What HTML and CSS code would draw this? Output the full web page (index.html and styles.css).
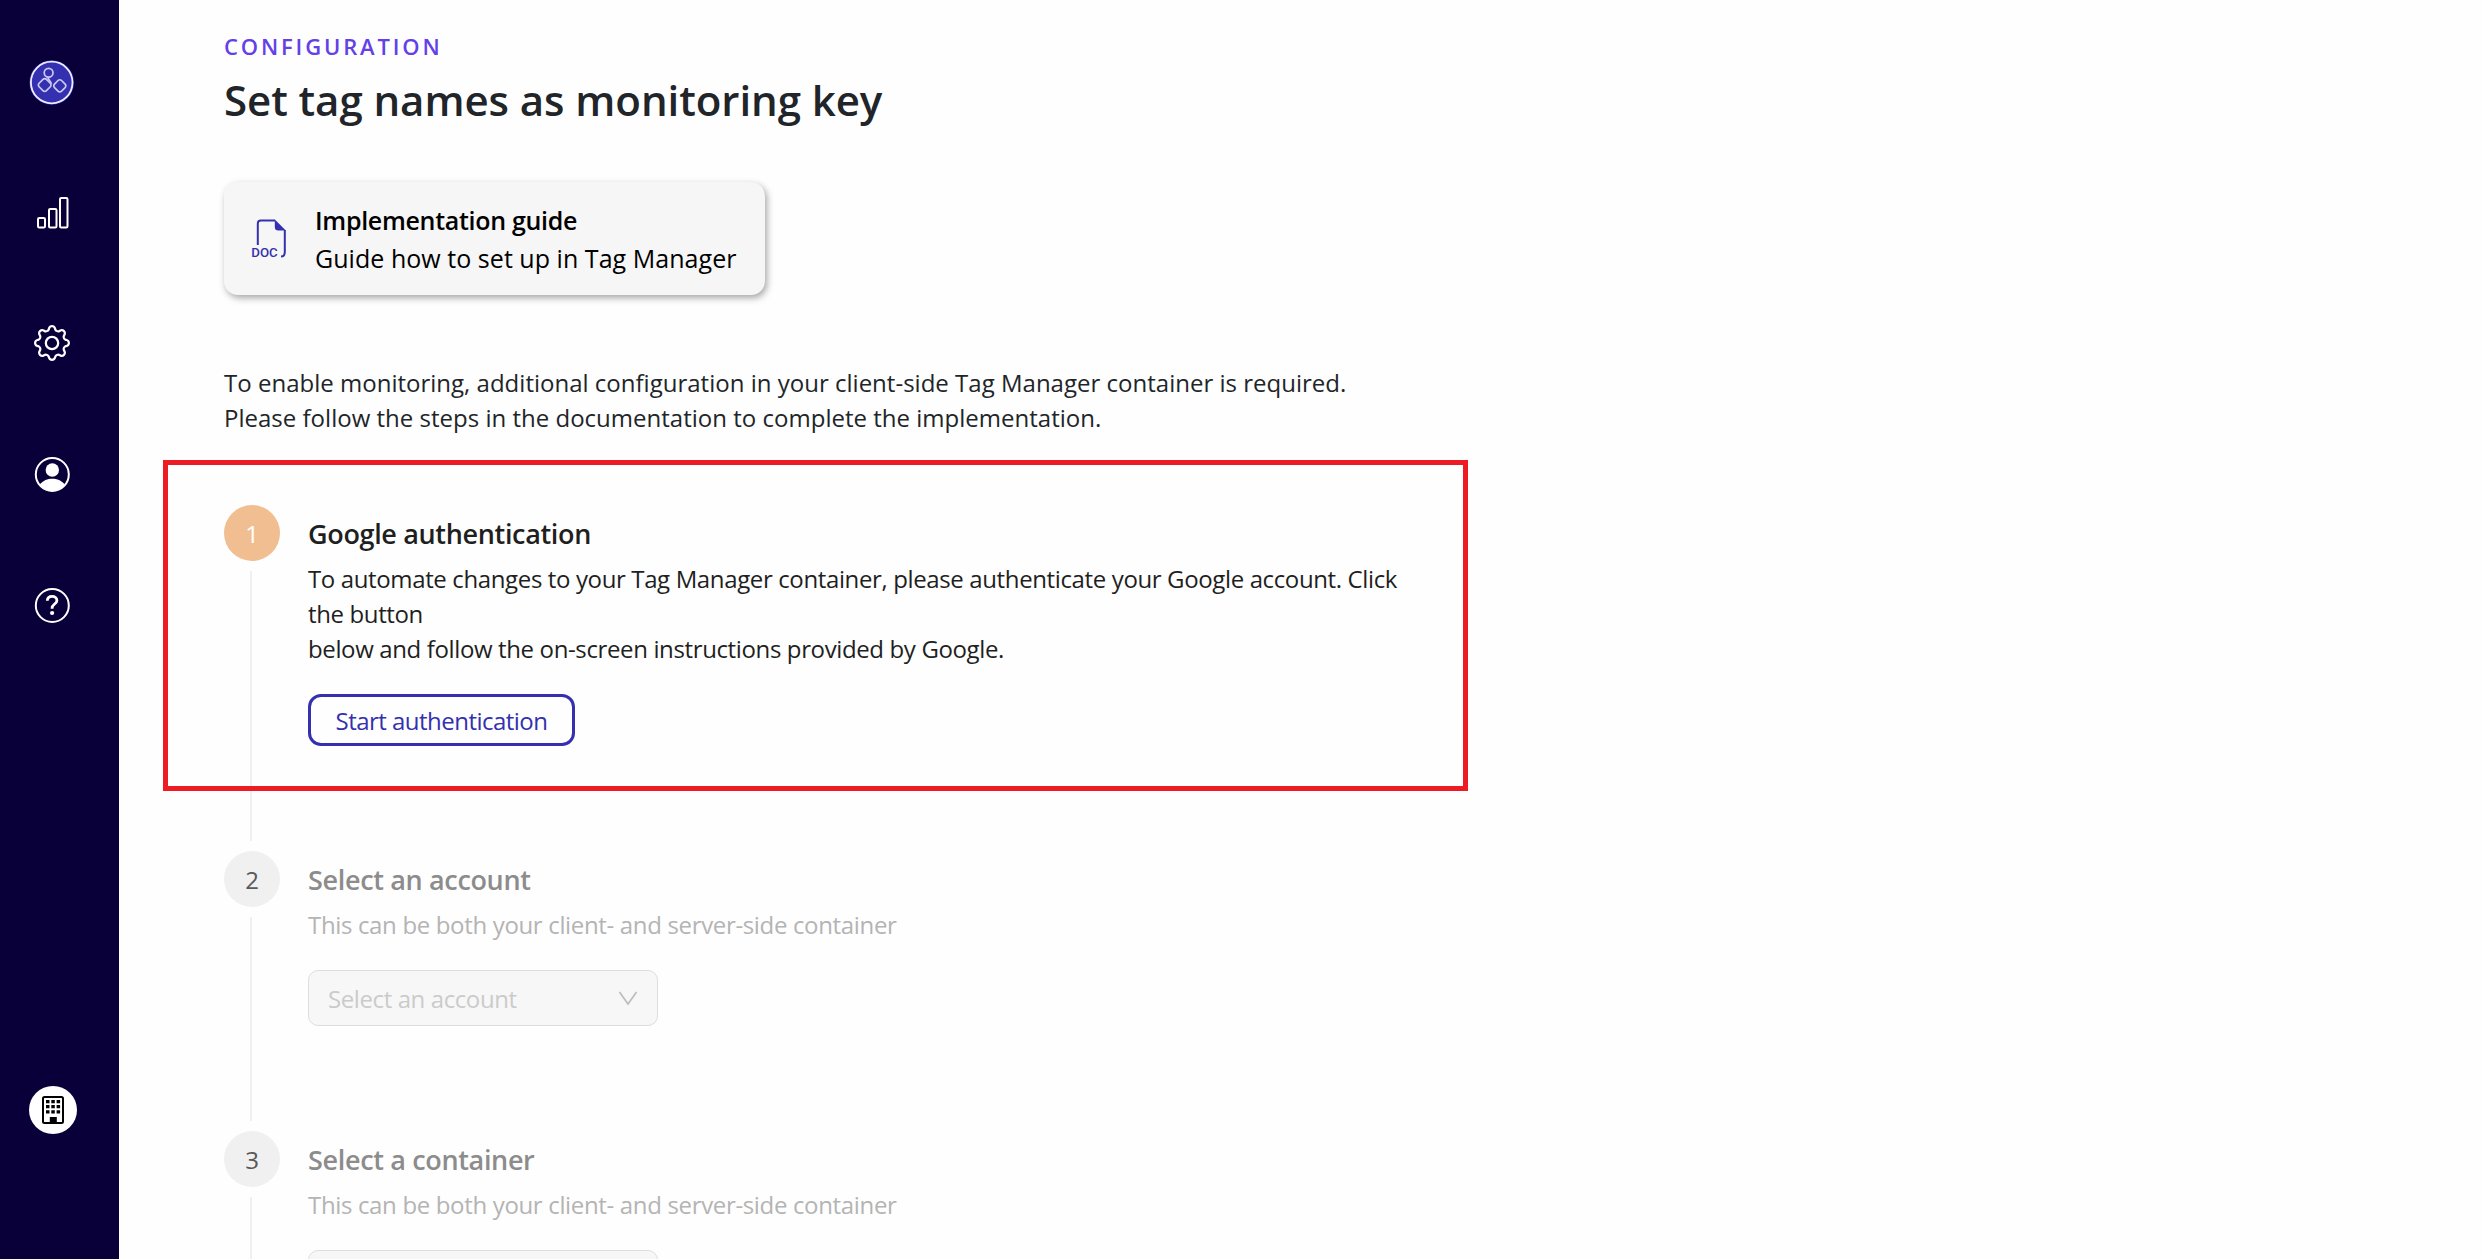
FILE: index.html
```html
<!DOCTYPE html>
<html lang="en">
<head>
<meta charset="utf-8">
<title>Set tag names as monitoring key</title>
<link rel="stylesheet" href="styles.css">
</head>
<body>
<nav class="sidebar">
  <svg class="logo" width="46" height="46" viewBox="0 0 46 46" fill="none">
    <circle cx="22.7" cy="22.5" r="22.3" fill="#3430b0"/>
    <circle cx="22.7" cy="22.5" r="20.8" stroke="#eeedfd" stroke-width="1.8"/>
    <g stroke="#c9c7f4" stroke-width="1.7">
      <circle cx="19.6" cy="12.8" r="4.4"/>
      <rect x="-5.2" y="-5.2" width="10.4" height="10.4" rx="2.5" transform="translate(15.7 25) rotate(45)"/>
      <rect x="-5" y="-5" width="10" height="10" rx="2.5" transform="translate(30.8 25.8) rotate(45)"/>
      <path d="M18.500 17.200l4 6.500"/>
    </g>
  </svg>
  <svg class="icon" width="36" height="36" viewBox="0 0 36 36" fill="none" stroke="#fff" stroke-width="2">
    <rect x="4" y="23" width="7" height="9.5" rx="1.2"/>
    <rect x="15" y="14" width="7.5" height="18.5" rx="1.2"/>
    <rect x="26" y="3" width="7.5" height="29.5" rx="1.2"/>
  </svg>
  <svg class="icon gear" width="36" height="36" viewBox="0 0 16 16" fill="#fff">
    <path d="M8 4.754a3.246 3.246 0 1 0 0 6.492 3.246 3.246 0 0 0 0-6.492zM5.754 8a2.246 2.246 0 1 1 4.492 0 2.246 2.246 0 0 1-4.492 0z"/>
    <path d="M9.796 1.343c-.527-1.79-3.065-1.79-3.592 0l-.094.319a.873.873 0 0 1-1.255.52l-.292-.16c-1.64-.892-3.433.902-2.54 2.541l.159.292a.873.873 0 0 1-.52 1.255l-.319.094c-1.79.527-1.79 3.065 0 3.592l.319.094a.873.873 0 0 1 .52 1.255l-.16.292c-.892 1.64.901 3.434 2.541 2.54l.292-.159a.873.873 0 0 1 1.255.52l.094.319c.527 1.79 3.065 1.79 3.592 0l.094-.319a.873.873 0 0 1 1.255-.52l.292.16c1.64.893 3.434-.902 2.54-2.541l-.159-.292a.873.873 0 0 1 .52-1.255l.319-.094c1.79-.527 1.79-3.065 0-3.592l-.319-.094a.873.873 0 0 1-.52-1.255l.16-.292c.893-1.64-.902-3.433-2.541-2.54l-.292.159a.873.873 0 0 1-1.255-.52l-.094-.319zm-2.633.283c.246-.835 1.428-.835 1.674 0l.094.319a1.873 1.873 0 0 0 2.693 1.115l.291-.16c.764-.415 1.6.42 1.184 1.185l-.159.292a1.873 1.873 0 0 0 1.116 2.692l.318.094c.835.246.835 1.428 0 1.674l-.319.094a1.873 1.873 0 0 0-1.115 2.693l.16.291c.415.764-.42 1.6-1.185 1.184l-.291-.159a1.873 1.873 0 0 0-2.693 1.116l-.094.318c-.246.835-1.428.835-1.674 0l-.094-.319a1.873 1.873 0 0 0-2.692-1.115l-.292.16c-.764.415-1.6-.42-1.184-1.185l.159-.291A1.873 1.873 0 0 0 1.945 8.93l-.319-.094c-.835-.246-.835-1.428 0-1.674l.319-.094A1.873 1.873 0 0 0 3.06 4.377l-.16-.292c-.415-.764.42-1.6 1.185-1.184l.292.159a1.873 1.873 0 0 0 2.692-1.115l.094-.319z"/>
  </svg>
  <svg class="icon" width="36" height="36" viewBox="0 0 36 36" fill="none">
    <circle cx="18.3" cy="18.5" r="16.5" stroke="#fff" stroke-width="2"/>
    <circle cx="18.3" cy="14" r="6.7" fill="#fff"/>
    <path d="M5.600 29c3.500-4.700 8-6.200 12.700-6.200s9.200 1.500 12.700 6.200A16.500 16.500 0 0 1 18.300 35 16.500 16.500 0 0 1 5.600 29z" fill="#fff"/>
  </svg>
  <svg class="icon" width="36" height="36" viewBox="0 0 36 36" fill="none">
    <circle cx="18.3" cy="18.5" r="16.5" stroke="#fff" stroke-width="2"/>
    <path d="M13.300 13.700c.1-2.800 2.100-4.300 4.900-4.300 2.700 0 4.700 1.600 4.700 4 0 3.600-4.800 3.700-4.800 7.700v.6" stroke="#fff" stroke-width="2.8"/>
    <circle cx="18.1" cy="26" r="2.1" fill="#fff"/>
  </svg>
  <svg class="org" width="48" height="48" viewBox="0 0 48 48">
    <circle cx="24" cy="24" r="24" fill="#fff"/>
    <rect x="14" y="11" width="20" height="26" rx="1.5" fill="none" stroke="#000" stroke-width="2"/>
    <path d="M17 14h3.500v3.200h-3.500zM22.300 14h3.500v3.200h-3.500zM27.600 14h3.500v3.200h-3.500zM17 19h3.500v3.200h-3.500zM22.300 19h3.500v3.200h-3.500zM27.600 19h3.500v3.200h-3.500zM17 24.200h3.500v3.200h-3.500zM22.300 24.200h3.500v3.200h-3.500zM27.600 24.200h3.500v3.200h-3.500zM20.800 31h7v6.500h-7z"/>
  </svg>
</nav>
<main class="main">
  <div class="eyebrow">CONFIGURATION</div>
  <h1 class="heading">Set tag names as monitoring key</h1>
  <a class="guide">
    <svg class="doc" width="36" height="42" viewBox="0 0 36 42" fill="none">
      <path d="M6.800 27V5.500c0-2 1-3 3-3H24M33.800 12V34c0 3-1 4.500-3.800 4.500" stroke="#3430b0" stroke-width="2"/>
      <path d="M23.800 1.500L34.800 12.500H27.300q-3.500 0-3.500-3.500z" fill="#3430b0"/>
      <text class="doc-label" x="0.3" y="38.8" textLength="26.5" lengthAdjust="spacingAndGlyphs">DOC</text>
    </svg>
    <span class="guide-text">
      <strong class="guide-title">Implementation guide</strong>
      <span class="guide-sub">Guide how to set up in Tag Manager</span>
    </span>
  </a>
  <p class="intro">To enable monitoring, additional configuration in your client-side Tag Manager container is required.<br>Please follow the steps in the documentation to complete the implementation.</p>
  <ol class="steps">
    <li class="step step-first active">
      <div class="rail"><span class="num">1</span></div>
      <div class="content">
        <h2 class="title">Google authentication</h2>
        <p class="desc">To automate changes to your Tag Manager container, please authenticate your Google account. Click<br>the button<br>below and follow the on-screen instructions provided by Google.</p>
        <button class="button">Start authentication</button>
      </div>
      <div class="highlight"></div>
    </li>
    <li class="step">
      <div class="rail"><span class="num">2</span></div>
      <div class="content">
        <h2 class="title">Select an account</h2>
        <p class="desc">This can be both your client- and server-side container</p>
        <div class="select"><span>Select an account</span>
          <svg width="20" height="16" viewBox="0 0 20 16" fill="none" stroke="#bfbfbf" stroke-width="1.8"><path d="M1.500 2L10 14 18.500 2"/></svg>
        </div>
      </div>
    </li>
    <li class="step step-last">
      <div class="rail"><span class="num">3</span></div>
      <div class="content">
        <h2 class="title">Select a container</h2>
        <p class="desc">This can be both your client- and server-side container</p>
        <div class="select"></div>
      </div>
    </li>
  </ol>
</main>
</body>
</html>
```
FILE: styles.css
```css
* { box-sizing: border-box; }
body {
  margin: 0;
  height: 1259px;
  overflow: hidden;
  display: flex;
  background: #fefefe;
  font-family: "Open Sans", sans-serif;
}
h1, h2, p, ol { margin: 0; padding: 0; font-weight: 400; }

.sidebar {
  width: 119px;
  height: 1259px;
  flex: none;
  background: #09003a;
  display: flex;
  flex-direction: column;
  padding: 60px 0 125px 29px;
}
.sidebar svg { flex: none; display: block; }
.icon { margin: 95px 0 0 5px; }
.logo + .icon { margin-top: 89px; }
.logo + .icon + .icon { margin-top: 94px; }
.org { margin-top: auto; }

.main { flex: 1; height: 1259px; overflow: hidden; padding: 31px 0 0 105px; }
.eyebrow {
  font-size: 22px;
  line-height: 30px;
  font-weight: 600;
  letter-spacing: 2.85px;
  color: #6340e8;
}
.heading {
  margin-top: 11px;
  font-size: 42px;
  line-height: 56px;
  font-weight: 600;
  letter-spacing: -0.06px;
  color: #212529;
}
.guide {
  margin-top: 54px;
  width: 541px;
  height: 113px;
  display: flex;
  align-items: center;
  padding-left: 27px;
  gap: 28px;
  border-radius: 14px;
  background: #f6f6f6;
  box-shadow: 2px 3px 7px rgba(0, 0, 0, .35);
  color: #000;
}
.doc { flex: none; overflow: visible; }
.doc-label { font: 500 13.5px Roboto, sans-serif; fill: #3430b0; }
.guide-text { display: flex; flex-direction: column; font-size: 25px; line-height: 38px; white-space: nowrap; }
.guide-title { font-weight: 600; letter-spacing: -0.3px; }
.guide-sub { letter-spacing: 0.04px; }
.intro {
  margin-top: 70px;
  font-size: 24px;
  line-height: 35px;
  letter-spacing: 0.01px;
  color: #212529;
  white-space: nowrap;
}

.steps { list-style: none; margin-top: 70px; }
.step { position: relative; display: flex; height: 280px; }
.step-first { height: 346px; }
.step-last { height: 128px; }
.rail {
  width: 56px;
  display: flex;
  flex-direction: column;
  align-items: center;
  gap: 10px;
  padding-bottom: 10px;
}
.step-last .rail { padding-bottom: 0; }
.rail::after { content: ""; width: 2px; flex: 1; margin-right: 2px; background: #f0f0f0; }
.num {
  width: 56px;
  height: 56px;
  border-radius: 50%;
  background: #f0f0f0;
  color: #595959;
  font-size: 24px;
  line-height: 58px;
  text-align: center;
}
.active .num { background: #f1be91; color: #fff; }
.content { padding: 8px 0 0 28px; white-space: nowrap; }
.step-last .content { height: 128px; overflow: hidden; }
.title {
  font-size: 27px;
  line-height: 42px;
  font-weight: 600;
  letter-spacing: -0.34px;
  color: #8c8c8c;
}
.active .title { color: #1f1f1f; }
.desc {
  margin-top: 6px;
  font-size: 24px;
  line-height: 35px;
  letter-spacing: -0.34px;
  color: #b4b4b4;
}
.active .desc { letter-spacing: -0.37px; color: #1f1f1f; }
.button {
  display: block;
  margin-top: 28px;
  width: 267px;
  height: 52px;
  padding: 2px 0 0;
  border: 3px solid #3430b0;
  border-radius: 13px;
  background: transparent;
  color: #3430b0;
  font: 24px/44px "Open Sans", sans-serif;
  letter-spacing: -0.53px;
}
.select {
  margin-top: 28px;
  width: 350px;
  height: 56px;
  display: flex;
  align-items: center;
  justify-content: space-between;
  padding: 0 19px 0 19px;
  border: 1px solid #dedede;
  border-radius: 10px;
  background: #f7f7f7;
  color: #cbcbcb;
  font-size: 24px;
  letter-spacing: -0.4px;
}
/* annotation frame drawn over the first step */
.highlight {
  position: absolute;
  left: -61px;
  top: -45px;
  width: 1305px;
  height: 331px;
  border: 5px solid #ed1c24;
}
```
